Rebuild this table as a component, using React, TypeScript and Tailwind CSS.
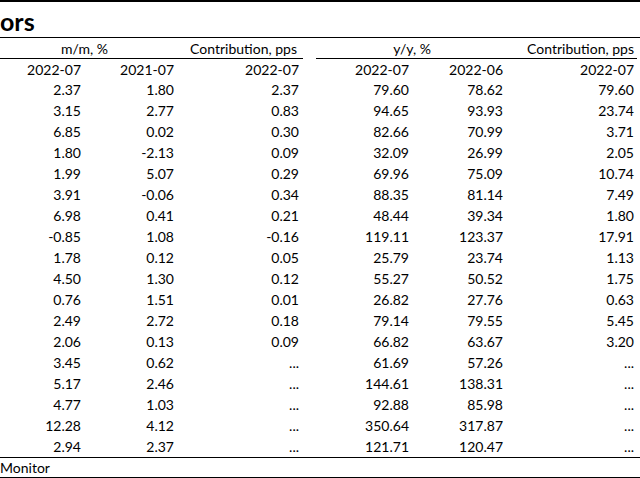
import React from 'react';

const rows: string[][] = [
  ['2.37', '1.80', '2.37', '79.60', '78.62', '79.60'],
  ['3.15', '2.77', '0.83', '94.65', '93.93', '23.74'],
  ['6.85', '0.02', '0.30', '82.66', '70.99', '3.71'],
  ['1.80', '-2.13', '0.09', '32.09', '26.99', '2.05'],
  ['1.99', '5.07', '0.29', '69.96', '75.09', '10.74'],
  ['3.91', '-0.06', '0.34', '88.35', '81.14', '7.49'],
  ['6.98', '0.41', '0.21', '48.44', '39.34', '1.80'],
  ['-0.85', '1.08', '-0.16', '119.11', '123.37', '17.91'],
  ['1.78', '0.12', '0.05', '25.79', '23.74', '1.13'],
  ['4.50', '1.30', '0.12', '55.27', '50.52', '1.75'],
  ['0.76', '1.51', '0.01', '26.82', '27.76', '0.63'],
  ['2.49', '2.72', '0.18', '79.14', '79.55', '5.45'],
  ['2.06', '0.13', '0.09', '66.82', '63.67', '3.20'],
  ['3.45', '0.62', '...', '61.69', '57.26', '...'],
  ['5.17', '2.46', '...', '144.61', '138.31', '...'],
  ['4.77', '1.03', '...', '92.88', '85.98', '...'],
  ['12.28', '4.12', '...', '350.64', '317.87', '...'],
  ['2.94', '2.37', '...', '121.71', '120.47', '...'],
];

const grid = 'grid grid-cols-[84px_93px_126px_13px_96px_94px_131px_3px]';

const Row = ({ cells }: { cells: string[] }) => (
  <div className={`${grid} h-[21px] items-center`}>
    <div className="text-right pr-[3px]">{cells[0]}</div>
    <div className="text-right pr-[3px]">{cells[1]}</div>
    <div className="text-right pr-[4px]">{cells[2]}</div>
    <div />
    <div className="text-right pr-[3px]">{cells[3]}</div>
    <div className="text-right pr-[3px]">{cells[4]}</div>
    <div className="text-right pr-[3px]">{cells[5]}</div>
    <div />
  </div>
);

const App = () => {
  return (
    <div
      className="w-[640px] h-[478px] bg-white text-black overflow-hidden text-[14px] leading-none"
      style={{ fontFamily: 'Lato, "Liberation Sans", sans-serif' }}
    >
      <div className="h-[38px] border-t-2 border-b border-black flex items-center">
        <span className="text-[25px] font-bold pt-[4px]">ors</span>
      </div>

      <div className={`${grid} h-[21px]`}>
        <div className="col-span-2 border-b border-black flex items-center justify-end pr-[69px] pt-[2px]">m/m, %</div>
        <div className="border-b border-black flex items-center justify-end pr-[6px] pt-[2px]">Contribution, pps</div>
        <div />
        <div className="col-span-2 border-b border-black flex items-center justify-end pr-[75px] pt-[2px]">y/y, %</div>
        <div className="border-b border-black flex items-center justify-end pr-[3px] pt-[2px]">Contribution, pps</div>
        <div />
      </div>

      <div className="h-[20px]">
        <Row cells={['2022-07', '2021-07', '2022-07', '2022-07', '2022-06', '2022-07']} />
      </div>

      {rows.map((r, i) => (
        <Row key={i} cells={r} />
      ))}

      <div className="h-[21px] border-t border-b border-black flex items-center">
        <span>Monitor</span>
      </div>
    </div>
  );
};

export default App;
